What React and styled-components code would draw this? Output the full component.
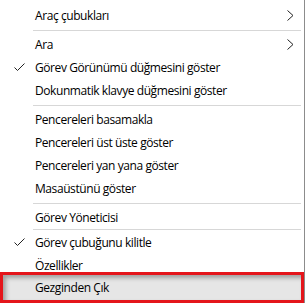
import React from "react";
import styled, { createGlobalStyle } from "styled-components";

const GlobalStyle = createGlobalStyle`
  html, body {
    margin: 0;
    padding: 0;
    background: #ffffff;
  }
  body {
    font-family: "Open Sans", "Noto Sans", sans-serif;
    font-size: 12px;
    color: #000000;
  }
`;

const Menu = styled.div`
  width: 305px;
  height: 303px;
  box-sizing: border-box;
  padding-top: 4px;
  border-right: 1px solid #8c8c8c;
  background: #ffffff;
  display: flex;
  flex-direction: column;
  overflow: hidden;
`;

const Item = styled.div`
  flex-shrink: 0;
  height: 23px;
  display: flex;
  align-items: center;
  position: relative;
  padding-left: 35px;
  padding-right: 10px;
  white-space: nowrap;
`;

const Label = styled.span`
  flex: 1;
  letter-spacing: -0.42px;
`;

const Check = styled.svg`
  position: absolute;
  left: 14px;
  top: 7px;
`;

const Chevron = styled.svg`
  flex-shrink: 0;
`;

const Separator = styled.div`
  flex-shrink: 0;
  height: 1px;
  margin: ${(p) => (p.$tight ? "0 3px 1px 33px" : "3px 3px 2px 33px")};
  background: #d7d7d7;
`;

const Exit = styled.div`
  flex-shrink: 0;
  height: 31px;
  margin-top: -5px;
  box-sizing: border-box;
  border: 3px solid #e4151b;
  display: flex;
  align-items: center;
  padding-left: 32px;
  background: #e6e6e6;
  box-shadow: inset 3px 3px 4px rgba(0, 0, 0, 0.3);
  white-space: nowrap;
`;

function CheckMark() {
  return (
    <Check width="11" height="9" viewBox="0 0 11 9">
      <path d="M0.5 4.5 L3.5 7.5 L10.5 0.5" fill="none" stroke="#222" strokeWidth="1" />
    </Check>
  );
}

function Arrow() {
  return (
    <Chevron width="7" height="11" viewBox="0 0 7 11">
      <path d="M0.5 0.5 L6 5.5 L0.5 10.5" fill="none" stroke="#222" strokeWidth="1" />
    </Chevron>
  );
}

function Row({ label, checked, submenu }) {
  return (
    <Item>
      {checked && <CheckMark />}
      <Label>{label}</Label>
      {submenu && <Arrow />}
    </Item>
  );
}

export default function App() {
  return (
    <>
      <GlobalStyle />
      <Menu>
        <Row label="Araç çubukları" submenu />
        <Separator />
        <Row label="Ara" submenu />
        <Row label="Görev Görünümü düğmesini göster" checked />
        <Row label="Dokunmatik klavye düğmesini göster" />
        <Separator />
        <Row label="Pencereleri basamakla" />
        <Row label="Pencereleri üst üste göster" />
        <Row label="Pencereleri yan yana göster" />
        <Row label="Masaüstünü göster" />
        <Separator />
        <Row label="Görev Yöneticisi" />
        <Separator $tight />
        <Row label="Görev çubuğunu kilitle" checked />
        <Row label="Özellikler" />
        <Exit>
          <Label>Gezginden Çık</Label>
        </Exit>
      </Menu>
    </>
  );
}
